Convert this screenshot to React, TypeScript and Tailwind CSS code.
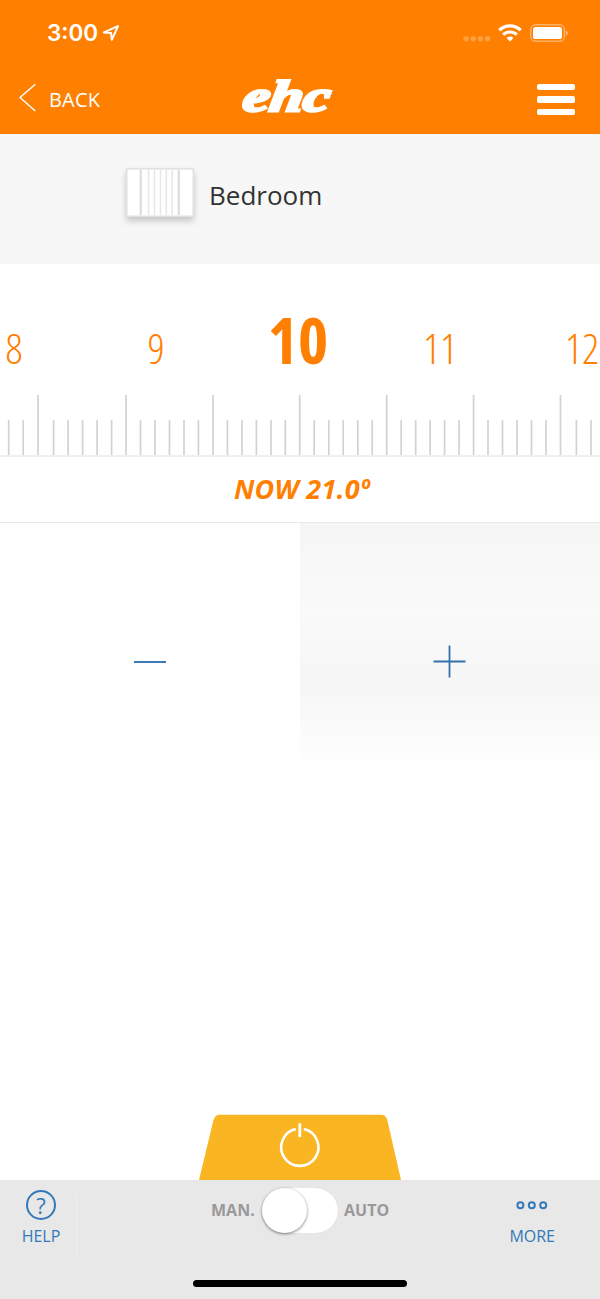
import { useState } from "react";

type Tick = {
  x: number;
  major?: boolean;
};

const temperatures = [8, 9, 10, 11, 12];

const majorTicks = [38, 126, 213, 299.7, 386.7, 473.6, 560.5];
const minorTicks = [
  8.7, 23.2, 53.6, 68.1, 82.6, 97.1, 111.6, 140.5, 155, 169.5, 184, 198.4, 227.4, 242, 256.4,
  271, 285.3, 314.2, 328.8, 343.2, 357.8, 372.2, 401.2, 415.7, 430.1, 444.6, 459.1, 488, 502.5,
  517, 531.5, 546, 576.4, 591,
];

const ticks: Tick[] = [
  ...majorTicks.map((x) => ({ x, major: true })),
  ...minorTicks.map((x) => ({ x })),
];

function StatusBar() {
  return (
    <div className="flex h-[66px] items-center pl-[47px] pr-[32px]">
      <span className="w-[52px] whitespace-nowrap font-[Inter] text-[22.5px] font-semibold leading-[28px]">3:00</span>
      <svg className="ml-[3px]" width="18" height="18" viewBox="0 0 18 18" fill="none">
        <path d="M2 8.4 L16 2.1 L9.8 15.8 L9.1 9.1 Z" stroke="white" strokeWidth="2" strokeLinejoin="round" />
      </svg>
      <svg className="ml-auto" width="28" height="20" viewBox="0 0 28 20" fill="white" fillOpacity="0.25">
        <circle cx="3" cy="15.8" r="2.7" />
        <circle cx="10.2" cy="15.8" r="2.7" />
        <circle cx="17.4" cy="15.8" r="2.7" />
        <circle cx="24.6" cy="15.8" r="2.7" />
      </svg>
      <svg className="ml-[7px]" width="24" height="18" viewBox="0 0 24 18" fill="none">
        <path d="M1.3 6.2 A15.6 15.6 0 0 1 22.7 6.2" stroke="white" strokeWidth="3.3" />
        <path d="M5.2 10.7 A9.8 9.8 0 0 1 18.8 10.7" stroke="white" strokeWidth="3.1" />
        <path d="M12 17.6 L8.5 14 A5 5 0 0 1 15.5 14 Z" fill="white" />
      </svg>
      <svg className="ml-[8px]" width="38" height="18" viewBox="0 0 38 18" fill="none">
        <rect x="0.8" y="0.8" width="33.6" height="16.4" rx="4.6" stroke="white" strokeOpacity="0.4" strokeWidth="1.4" />
        <rect x="3" y="3" width="29" height="12" rx="2.6" fill="white" />
        <path d="M35.8 6.2 C38.4 7.2 38.4 10.8 35.8 11.8 Z" fill="white" fillOpacity="0.45" />
      </svg>
    </div>
  );
}

function Header() {
  return (
    <header className="h-[133.5px] bg-[#ff8000] text-white">
      <StatusBar />
      <div className="flex h-[67px] items-center pl-[18px] pr-[25px]">
        <button className="flex w-[217px] items-center">
          <svg className="-mt-[4px]" width="19" height="30" viewBox="0 0 19 30" fill="none">
            <path d="M17.3 1.2 L2 14.5 L17.3 28" stroke="white" strokeWidth="1.4" />
          </svg>
          <span className="ml-[12px] text-[20px] leading-[28px] tracking-[0.2px]">BACK</span>
        </button>
        <svg width="104" height="64" viewBox="0 0 104 64">
          <text
            x="6"
            y="43"
            textLength="87"
            lengthAdjust="spacingAndGlyphs"
            transform="translate(6.6 0) skewX(-8)"
            fill="white"
            stroke="white"
            strokeWidth="2.8"
            fontFamily="Liberation Serif, serif"
            fontSize="44"
            fontWeight="bold"
            fontStyle="italic"
          >
            ehc
          </text>
        </svg>
        <button className="ml-auto flex w-[38px] flex-col gap-[6px]" aria-label="Menu">
          <span className="h-[6.5px] rounded-[2px] bg-white" />
          <span className="h-[6.5px] rounded-[2px] bg-white" />
          <span className="h-[6.5px] rounded-[2px] bg-white" />
        </button>
      </div>
    </header>
  );
}

function RoomBar() {
  return (
    <div className="flex h-[130.5px] items-center bg-[#f7f7f7] pb-[8px] pl-[126px]">
      <svg className="-mt-1 drop-shadow-[0_4px_3px_rgba(0,0,0,0.2)]" width="68" height="49" viewBox="0 0 68 49">
        <rect x="0.75" y="0.75" width="66.5" height="47.5" fill="white" stroke="#e0e0e0" strokeWidth="1.5" />
        <path d="M14.8 2 V47 M52.8 2 V47" stroke="#dfdfdf" strokeWidth="2.4" />
        <path d="M22.5 2 V47 M28.5 2 V47 M34.5 2 V47 M40.3 2 V47 M46.2 2 V47" stroke="#e6e6e6" strokeWidth="1.5" />
      </svg>
      <span className="ml-[15px] text-[26px] leading-[36px] text-[#333]">Bedroom</span>
    </div>
  );
}

function Ruler({ value }: { value: number }) {
  return (
    <section className="h-[193px] overflow-hidden border-b-2 border-[#f0f0f0] text-[#ff8000]">
      <div className="flex h-[130px] w-[596px] items-end justify-center pb-[31px]">
        {temperatures.map((t) => (
          <span
            key={t}
            className={
              t === value
                ? "mb-[1px] w-[142px] shrink-0 text-center text-[64.5px] font-bold leading-[46px] font-stretch-condensed"
                : "w-[142px] shrink-0 text-center text-[42px] font-light leading-[30px] font-stretch-condensed"
            }
          >
            {t}
          </span>
        ))}
      </div>
      <svg width="600" height="62" viewBox="0 0 600 62">
        {ticks.map((tick) => (
          <line
            key={tick.x}
            x1={tick.x}
            x2={tick.x}
            y1={tick.major ? 1 : 26}
            y2="61"
            stroke="#d2d2d2"
            strokeWidth="1.7"
          />
        ))}
      </svg>
    </section>
  );
}

function Stepper({ onChange }: { onChange: (step: number) => void }) {
  return (
    <div className="grid h-[250px] grid-cols-2">
      <button className="flex items-center justify-center pt-[27px]" onClick={() => onChange(-1)} aria-label="Decrease">
        <svg width="34" height="34" viewBox="0 0 34 34">
          <path d="M1 17 H33" stroke="#3c7ab5" strokeWidth="2" />
        </svg>
      </button>
      <button
        className="flex items-center justify-center bg-[linear-gradient(#f6f6f6_0%,#fafafa_36%,#f6f6f6_64%,#fafafa_80%,#ffffff_100%)] pt-[27px]"
        onClick={() => onChange(1)}
        aria-label="Increase"
      >
        <svg width="34" height="34" viewBox="0 0 34 34">
          <path d="M0.5 16.5 H32.5 M16.5 0.5 V32.5" stroke="#3471ab" strokeWidth="1.8" />
        </svg>
      </button>
    </div>
  );
}

function Footer() {
  const [auto, setAuto] = useState(false);

  return (
    <footer className="flex h-[119px] flex-col bg-[#e8e8e8]">
      <div className="flex h-[103px] items-start text-[#3379b7]">
        <button className="mt-[13px] flex h-[64px] w-[77px] flex-col items-center border-r border-[#efefef] pr-[1px]">
          <span className="-mt-[3px] ml-[7px] flex size-[30px] shrink-0 items-center justify-center rounded-full border-2 border-[#3379b7] text-[22px] leading-[26px]">
            ?
          </span>
          <span className="ml-[7px] mt-[6px] text-[16px] leading-[20px]">HELP</span>
        </button>
        <div className="ml-[134px] mt-[8px] flex h-[45px] items-center text-[16px] font-bold text-[#999]">
          <span className="-mt-[1px] w-[51px]">MAN.</span>
          <button
            className={auto ? "flex h-[45px] w-[76px] justify-end rounded-full bg-white" : "flex h-[45px] w-[76px] rounded-full bg-white shadow-[0_0_1px_#ccc]"}
            onClick={() => setAuto(!auto)}
            aria-label="Mode"
          >
            <span className="size-[44.5px] rounded-full bg-white shadow-[0_1px_3px_rgba(0,0,0,0.5)]" />
          </button>
          <span className="-mt-[1px] ml-[6px]">AUTO</span>
        </div>
        <button className="ml-auto mr-[45px] mt-[20px] flex flex-col items-center">
          <svg width="32" height="10" viewBox="0 0 32 10" fill="none" stroke="#3379b7" strokeWidth="2">
            <circle cx="4.4" cy="5.2" r="3" />
            <circle cx="15.8" cy="5.2" r="3" />
            <circle cx="27.2" cy="5.2" r="3" />
          </svg>
          <span className="mt-[16px] text-[16px] leading-[20px]">MORE</span>
        </button>
      </div>
      <div className="mx-auto -mt-[3px] h-[7px] w-[214px] rounded-full bg-black" />
    </footer>
  );
}

export default function App() {
  const [target, setTarget] = useState(10);

  return (
    <div className="flex h-[1299px] w-[600px] flex-col overflow-hidden bg-white font-['Open_Sans',sans-serif]">
      <Header />
      <RoomBar />
      <Ruler value={target} />
      <div className="flex h-[66px] items-center justify-center border-b border-[#e9e9e9] pl-[4px] text-[27px] font-bold italic tracking-[0.3px] text-[#ff8000]">
        NOW 21.0º
      </div>
      <Stepper onChange={(step) => setTarget((t) => Math.min(12, Math.max(8, t + step)))} />
      <button className="mx-auto mt-auto" aria-label="Power">
        <svg className="block" width="202" height="66" viewBox="0 0 202 66" fill="none">
          <path d="M0 66 L14.5 6 Q16 0.7 21 0.7 H182 Q187 0.7 188.3 6 L202 66 Z" fill="#f9b522" />
          <path d="M96.8 15.1 A18.6 18.6 0 1 0 104.8 15.1" stroke="white" strokeWidth="2.6" />
          <path d="M100.8 9.3 V23.2" stroke="white" strokeWidth="2.8" />
        </svg>
      </button>
      <Footer />
    </div>
  );
}
